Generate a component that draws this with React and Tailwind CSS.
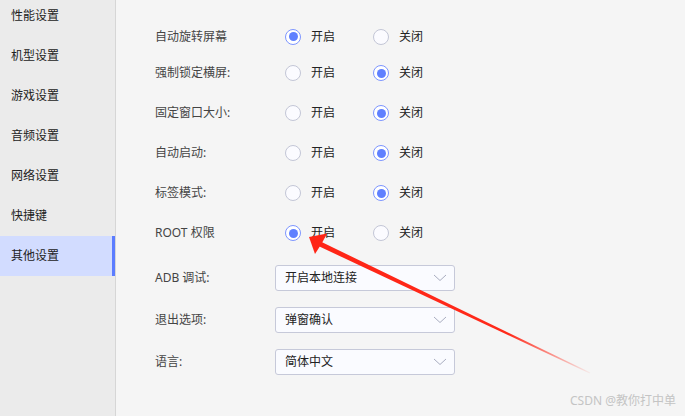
import React from "react";

const font = { fontFamily: '"Noto Sans", "Noto Sans CJK SC", sans-serif' };

const sidebar = ["性能设置", "机型设置", "游戏设置", "音频设置", "网络设置", "快捷键", "其他设置"];

function Radio({ checked }) {
  return checked ? (
    <span className="flex h-4 w-4 items-center justify-center rounded-full border-[1.5px] border-[#7d95ff] bg-white">
      <span className="h-[9px] w-[9px] rounded-full bg-[#5f80ff]" />
    </span>
  ) : (
    <span className="h-4 w-4 rounded-full border border-[#c3c6d6] bg-[#fbfbff]" />
  );
}

function RadioRow({ label, on, first }) {
  return (
    <div className={`flex items-center ${first ? "h-[33px]" : "h-10"}`}>
      <div className="w-[120px] text-[12px] text-[#444]">{label}</div>
      <div className="flex items-center pl-[10px]">
        <div className="flex w-[88px] items-center gap-[10px]">
          <Radio checked={on} />
          <span className="text-[12px] text-[#222]">开启</span>
        </div>
        <div className="flex items-center gap-[10px]">
          <Radio checked={!on} />
          <span className="text-[12px] text-[#222]">关闭</span>
        </div>
      </div>
    </div>
  );
}

function SelectRow({ label, value }) {
  return (
    <div className="flex items-center">
      <div className="w-[120px] text-[12px] text-[#444]">{label}</div>
      <div className="flex h-[26px] w-[180px] items-center justify-between rounded-[3px] border border-[#c6c9d9] bg-[#fafbff] pl-[9px] pr-[7px]">
        <span className="text-[12px] text-[#222]">{value}</span>
        <svg width="14" height="8" viewBox="0 0 14 8">
          <path d="M1 1 L7 6.5 L13 1" fill="none" stroke="#a9adc0" strokeWidth="1" />
        </svg>
      </div>
    </div>
  );
}

export default function App() {
  return (
    <div className="relative flex h-[416px] w-[685px] overflow-hidden bg-[#f5f5f5]" style={font}>
      <div className="w-[116px] shrink-0 border-r border-[#d6d6d6] bg-[#ebebeb]">
        <div className="-mt-[4px]">
          {sidebar.map((s, i) => (
            <div
              key={s}
              className={`flex h-10 items-center pl-[11px] text-[12px] text-[#222] ${
                i === 6 ? "border-r-[3px] border-[#5b7cff] bg-[#d2dcff]" : ""
              }`}
            >
              {s}
            </div>
          ))}
        </div>
      </div>
      <div className="flex-1 pl-[39px] pt-[20px]">
        <RadioRow label="自动旋转屏幕" on first />
        <RadioRow label="强制锁定横屏:" on={false} />
        <RadioRow label="固定窗口大小:" on={false} />
        <RadioRow label="自动启动:" on={false} />
        <RadioRow label="标签模式:" on={false} />
        <RadioRow label="ROOT 权限" on />
        <div className="mt-[12px] flex flex-col gap-[16px]">
          <SelectRow label="ADB 调试:" value="开启本地连接" />
          <SelectRow label="退出选项:" value="弹窗确认" />
          <SelectRow label="语言:" value="简体中文" />
        </div>
      </div>
      <svg className="pointer-events-none absolute left-0 top-0" width="685" height="416" viewBox="0 0 685 416">
        <defs>
          <linearGradient id="fade" x1="318" y1="242" x2="590" y2="373" gradientUnits="userSpaceOnUse">
            <stop offset="0" stopColor="#ff2516" />
            <stop offset="0.7" stopColor="#ff2a1a" />
            <stop offset="1" stopColor="#ff2a1a" stopOpacity="0.05" />
          </linearGradient>
        </defs>
        <polygon points="321.1,241.75 318.9,246.25 589.7,373.5 590.3,372.5" fill="url(#fade)" />
        <polygon points="309,237 327,233.5 322,243 315,254" fill="#ff2516" />
      </svg>
      <div className="absolute bottom-[6px] right-[9px] text-[12px] text-[#c4c4c4]">CSDN @教你打中单</div>
    </div>
  );
}
